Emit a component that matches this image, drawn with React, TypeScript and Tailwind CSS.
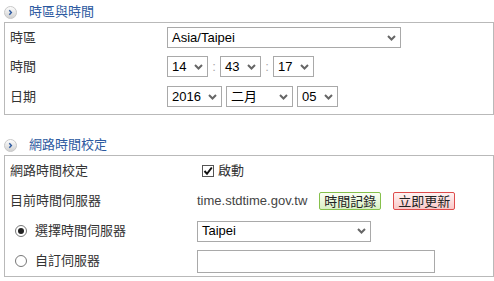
import React from "react"

const Chevron = () => (
  <svg width="9" height="6" viewBox="0 0 9 6" className="shrink-0">
    <path d="M1 1 L4.5 4.5 L8 1" fill="none" stroke="#666" strokeWidth="2" />
  </svg>
)

const SectionIcon = () => (
  <svg width="13" height="13" viewBox="0 0 13 13">
    <defs>
      <linearGradient id="ig" x1="0" y1="0" x2="0" y2="1">
        <stop offset="0" stopColor="#ffffff" />
        <stop offset="1" stopColor="#cfcfcf" />
      </linearGradient>
    </defs>
    <circle cx="6.5" cy="6.5" r="6" fill="url(#ig)" stroke="#c8c8c8" />
    <path d="M5.3 4.2 L7.4 6.5 L5.3 8.8" fill="none" stroke="#2d5aa0" strokeWidth="1.4" />
  </svg>
)

const Select = ({ value, width }: { value: string; width: string }) => (
  <div className={`flex h-[21px] items-center justify-between border border-[#a9a9a9] bg-white pl-[4px] pr-[4px] text-[13px] text-black ${width}`}>
    <span>{value}</span>
    <Chevron />
  </div>
)

const Header = ({ title }: { title: string }) => (
  <div className="flex h-[22px] items-center gap-[12px] pl-[4px] pt-[2px]">
    <SectionIcon />
    <span className="text-[13px] text-[#2d5aa0]">{title}</span>
  </div>
)

const Colon = () => <span className="w-[12px] text-center text-[13px] text-[#aaa]">:</span>

const Radio = ({ checked }: { checked?: boolean }) => (
  <span className="flex h-[12px] w-[12px] items-center justify-center rounded-full border border-[#777] bg-white">
    {checked && <span className="h-[6px] w-[6px] rounded-full bg-[#222]" />}
  </span>
)

export default function App() {
  return (
    <div className="h-[281px] w-[494px] bg-white text-[#333]" style={{ fontFamily: '"Liberation Sans", "Noto Sans CJK TC", sans-serif' }}>
      <Header title="時區與時間" />
      <div className="ml-[4px] w-[490px] border border-[#b9b9b9] pb-[2px] pl-[5px] text-[13px]">
        <div className="flex h-[29px] items-center">
          <span className="w-[157px]">時區</span>
          <Select value="Asia/Taipei" width="w-[234px]" />
        </div>
        <div className="flex h-[29px] items-center">
          <span className="w-[157px]">時間</span>
          <Select value="14" width="w-[41px]" />
          <Colon />
          <Select value="43" width="w-[41px]" />
          <Colon />
          <Select value="17" width="w-[41px]" />
        </div>
        <div className="flex h-[31px] items-center">
          <span className="w-[157px]">日期</span>
          <Select value="2016" width="w-[55px]" />
          <div className="w-[4px]" />
          <Select value="二月" width="w-[67px]" />
          <div className="w-[4px]" />
          <Select value="05" width="w-[41px]" />
        </div>
      </div>

      <div className="mt-[18px]">
        <Header title="網路時間校定" />
      </div>
      <div className="ml-[4px] w-[490px] border border-[#b9b9b9] pl-[5px] text-[13px]">
        <div className="flex h-[30px] items-center">
          <span className="w-[192px]">網路時間校定</span>
          <span className="flex h-[12px] w-[12px] items-center justify-center border border-[#555] bg-white">
            <svg width="10" height="10" viewBox="0 0 10 10">
              <path d="M1.5 5 L4 7.8 L8.8 1.5" fill="none" stroke="#111" strokeWidth="2" />
            </svg>
          </span>
          <span className="ml-[4px]">啟動</span>
        </div>
        <div className="flex h-[30px] items-center">
          <span className="w-[187px]">目前時間伺服器</span>
          <span className="text-[#444]">time.stdtime.gov.tw</span>
          <button className="ml-[12px] flex h-[18px] items-center rounded-[2px] border border-[#86c04c] bg-gradient-to-b from-[#fbfff5] to-[#d9efc4] px-[4px] text-[13px] leading-none text-[#222]">
            時間記錄
          </button>
          <button className="ml-[12px] flex h-[18px] items-center rounded-[2px] border border-[#de4c4c] bg-gradient-to-b from-[#fff3f3] to-[#f9c8c8] px-[4px] text-[13px] leading-none text-[#222]">
            立即更新
          </button>
        </div>
        <div className="flex h-[30px] items-center">
          <div className="flex w-[187px] items-center pl-[5px]">
            <Radio checked />
            <span className="ml-[8px]">選擇時間伺服器</span>
          </div>
          <Select value="Taipei" width="w-[174px]" />
        </div>
        <div className="flex h-[30px] items-center">
          <div className="flex w-[187px] items-center pl-[5px]">
            <Radio />
            <span className="ml-[8px]">自訂伺服器</span>
          </div>
          <div className="h-[23px] w-[238px] border border-[#a9a9a9] bg-white" />
        </div>
      </div>
    </div>
  )
}
